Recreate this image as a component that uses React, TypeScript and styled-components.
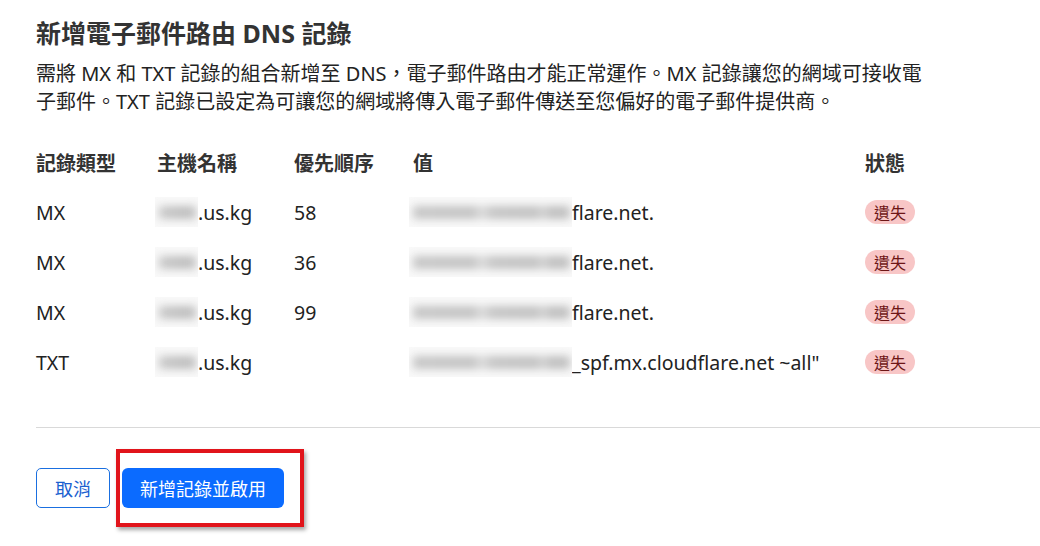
import React from 'react'
import styled, { createGlobalStyle } from 'styled-components'

const GlobalStyle = createGlobalStyle`
    html, body {
        margin: 0;
        background: #ffffff;
    }
    body {
        font-family: "Noto Sans", "Noto Sans CJK TC", sans-serif;
        color: #222;
    }
`

type Record = {
    type: string
    host: string
    priority?: string
    value: string
}

const records: Record[] = [
    { type: 'MX', host: '.us.kg', priority: '58', value: 'flare.net.' },
    { type: 'MX', host: '.us.kg', priority: '36', value: 'flare.net.' },
    { type: 'MX', host: '.us.kg', priority: '99', value: 'flare.net.' },
    { type: 'TXT', host: '.us.kg', value: '_spf.mx.cloudflare.net ~all"' },
]

export default function App() {
    return (
        <Page>
            <GlobalStyle />
            <Title>新增電子郵件路由 DNS 記錄</Title>
            <Description>
                需將 MX 和 TXT 記錄的組合新增至 DNS，電子郵件路由才能正常運作。MX 記錄讓您的網域可接收電子郵件。TXT 記錄已設定為可讓您的網域將傳入電子郵件傳送至您偏好的電子郵件提供商。
            </Description>
            <Table>
                <Head>記錄類型</Head>
                <Head>主機名稱</Head>
                <Head>優先順序</Head>
                <Head>值</Head>
                <Head>狀態</Head>
                {records.map((r, i) => (
                    <React.Fragment key={i}>
                        <Cell>{r.type}</Cell>
                        <Cell>
                            <Redacted $width={43} aria-hidden />
                            {r.host}
                        </Cell>
                        <Cell>{r.priority}</Cell>
                        <Cell>
                            <Redacted $width={163} $long aria-hidden />
                            {r.value}
                        </Cell>
                        <Cell>
                            <Badge>遺失</Badge>
                        </Cell>
                    </React.Fragment>
                ))}
            </Table>
            <Divider />
            <Actions>
                <SecondaryButton>取消</SecondaryButton>
                <Highlight>
                    <PrimaryButton>新增記錄並啟用</PrimaryButton>
                </Highlight>
            </Actions>
        </Page>
    )
}

const Page = styled.main`
    display: flex;
    flex-direction: column;
    box-sizing: border-box;
    min-height: 100vh;
    padding: 16px 0 40px 36px;
`
const Title = styled.h1`
    margin: 0;
    font-size: 25px;
    line-height: 34px;
    font-weight: 700;
    color: #333;
`
const Description = styled.p`
    margin: 10px 0 0;
    max-width: 895px;
    font-size: 20px;
    line-height: 28px;
    color: #222;
`
const Table = styled.div`
    display: grid;
    grid-template-columns: 121px 137px 119px 452px 1fr;
    grid-auto-rows: 50px;
    margin-top: 21px;
    margin-right: 36px;
`
const Head = styled.div`
    display: flex;
    align-items: center;
    font-size: 20px;
    font-weight: 700;
    color: #333;
`
const Cell = styled.div`
    display: flex;
    align-items: center;
    font-size: 19.5px;
    color: #222;
    white-space: nowrap;
`
// blurred-out part of the screenshot (hidden host / record value)
const Redacted = styled.span<{ $width: number; $long?: boolean }>`
    position: relative;
    display: inline-block;
    flex: none;
    width: ${p => p.$width}px;
    height: 30px;
    margin-left: ${p => (p.$long ? '-4px' : '-2px')};
    overflow: hidden;
    background: #f9f9f9;

    &::before {
        content: '';
        position: absolute;
        inset: 9px 2px 8px 4px;
        background: ${p =>
            p.$long
                ? 'linear-gradient(90deg, #c6c6c6 0%, #c2c2c2 38%, #dcdcdc 44%, #c4c4c4 50%, #c0c0c0 78%, #d2d2d2 83%, #bdbdbd 88%, #c2c2c2 100%)'
                : 'linear-gradient(90deg, #cacaca 0%, #bdbdbd 60%, #c2c2c2 100%)'};
        filter: blur(4px);
    }
`
const Badge = styled.span`
    display: inline-flex;
    align-items: center;
    justify-content: center;
    height: 24px;
    padding: 0 9px;
    border-radius: 12px;
    background: #f8c6c6;
    color: #6e1616;
    font-size: 16px;
`
const Divider = styled.hr`
    margin: 40px 0 0;
    border: 0;
    border-top: 1px solid #d9d9d9;
`
const Actions = styled.div`
    display: flex;
    align-items: center;
    gap: 12px;
    margin-top: 40px;
`
const SecondaryButton = styled.button`
    height: 40px;
    padding: 0 18px;
    border: 1px solid #1a6fe0;
    border-radius: 5px;
    background: #fff;
    color: #1a5fd0;
    font-family: inherit;
    font-size: 18px;
`
const Highlight = styled.div`
    position: relative;

    &::after {
        content: '';
        position: absolute;
        top: -19px;
        left: -6px;
        right: -20px;
        bottom: -19px;
        border: 4px solid #e1141b;
        box-shadow: 2px 3px 4px rgba(0, 0, 0, 0.35);
        pointer-events: none;
    }
`
const PrimaryButton = styled.button`
    height: 40px;
    width: 162px;
    border: 0;
    border-radius: 6px;
    background: #0b6bff;
    color: #fff;
    font-family: inherit;
    font-size: 18px;
`
